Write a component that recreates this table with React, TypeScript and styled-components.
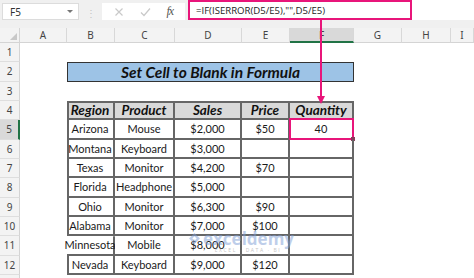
import React from "react";
import styled, { createGlobalStyle, css } from "styled-components";

const Global = createGlobalStyle`
  html, body { margin: 0; padding: 0; background: #ffffff; }
  #root { width: 474px; height: 278px; }
`;

const Page = styled.div`
  position: relative;
  width: 474px;
  height: 278px;
  overflow: hidden;
  background: #ffffff;
  display: flex;
  flex-direction: column;
  font-family: Lato, "Liberation Sans", sans-serif;
`;

const Toolbar = styled.div`
  height: 28px;
  flex: none;
  background: #f0f0f0;
  display: flex;
  align-items: flex-start;
  box-sizing: border-box;
`;

const NameBox = styled.div`
  margin: 3px 0 0 2px;
  width: 77px;
  height: 17px;
  background: #ffffff;
  border: 1px solid #dcdcdc;
  box-sizing: border-box;
  display: flex;
  align-items: center;
  justify-content: space-between;
  padding: 0 5px 0 7px;
  font-family: "Noto Sans", "Liberation Sans", sans-serif;
  font-size: 10px;
  color: #333;
`;

const Caret = styled.span`
  width: 0;
  height: 0;
  border-left: 3px solid transparent;
  border-right: 3px solid transparent;
  border-top: 3px solid #777;
`;

const Dots = styled.div`
  width: 23px;
  height: 20px;
  display: flex;
  align-items: center;
  justify-content: center;
  margin-top: 3px;
  color: #c4c4c4;
  font-size: 10px;
  font-family: "Noto Sans", sans-serif;
`;

const IconBox = styled.div`
  margin-top: 3px;
  width: 83px;
  height: 17px;
  background: #ffffff;
  display: flex;
  align-items: center;
  justify-content: space-around;
  padding: 0 4px;
  box-sizing: border-box;
`;

const Fx = styled.span`
  font-family: "Liberation Serif", serif;
  font-style: italic;
  font-size: 12px;
  color: #555;
  letter-spacing: -1px;
`;

const FormulaArea = styled.div`
  margin-left: 3px;
  flex: 1;
  height: 20px;
  background: #ffffff;
  display: flex;
`;

const FormulaBox = styled.div`
  width: 224px;
  height: 20px;
  box-sizing: border-box;
  border: 2px solid #e8157a;
  display: flex;
  align-items: center;
  padding-left: 6px;
  font-family: "Open Sans", sans-serif;
  font-size: 9.6px;
  color: #222;
`;

const Sheet = styled.div`
  display: grid;
  grid-template-columns: 20px 47px 48px 60px 67px 48px 64px 48px 49px 23px;
  grid-template-rows: 15px repeat(13, 19.33px);
`;

const Corner = styled.div`
  background: #f3f3f3;
  border-right: 1px solid #d4d4d4;
  border-bottom: 1px solid #d4d4d4;
  box-sizing: border-box;
  position: relative;
  &::after {
    content: "";
    position: absolute;
    right: 2px;
    bottom: 2px;
    width: 0;
    height: 0;
    border-left: 7px solid transparent;
    border-bottom: 7px solid #c8c8c8;
  }
`;

const ColHead = styled.div<{ $sel?: boolean }>`
  background: ${(p) => (p.$sel ? "#d9d9d9" : "#f3f3f3")};
  border-right: 1px solid #d8d8d8;
  border-bottom: ${(p) => (p.$sel ? "2px solid #217346" : "1px solid #d4d4d4")};
  box-sizing: border-box;
  display: flex;
  align-items: center;
  justify-content: center;
  font-family: "Noto Sans", "Liberation Sans", sans-serif;
  font-size: 10px;
  color: #444;
`;

const RowHead = styled.div<{ $sel?: boolean }>`
  background: ${(p) => (p.$sel ? "#d9d9d9" : "#f3f3f3")};
  border-right: ${(p) => (p.$sel ? "2px solid #217346" : "1px solid #d4d4d4")};
  border-bottom: 1px solid #dedede;
  box-sizing: border-box;
  display: flex;
  align-items: center;
  justify-content: center;
  font-family: "Noto Sans", "Liberation Sans", sans-serif;
  font-size: 10px;
  color: #444;
`;

const Blank = styled.div``;

const Title = styled.div`
  grid-column: span 5;
  background: #9dc3e6;
  border: 1px solid #333;
  box-sizing: border-box;
  display: flex;
  align-items: center;
  justify-content: center;
  font-family: Lato, sans-serif;
  font-weight: 700;
  font-style: italic;
  font-size: 15.5px;
  color: #111;
`;

const line = "#666";

const Cell = styled.div<{ $head?: boolean; $first?: boolean; $top?: boolean; $open?: boolean }>`
  position: relative;
  box-sizing: border-box;
  display: flex;
  align-items: center;
  justify-content: center;
  white-space: nowrap;
  font-family: Lato, sans-serif;
  font-size: 11px;
  color: #1a1a1a;
  border-right: 2px solid ${line};
  border-bottom: 2px solid ${line};
  ${(p) =>
    p.$head &&
    css`
      background: #d9d9d9;
      font-weight: 700;
      font-style: italic;
      font-size: 13.5px;
      color: #111;
    `}
  ${(p) =>
    p.$first &&
    !p.$open &&
    css`
      box-shadow: inset 2px 0 0 ${line};
    `}
  ${(p) =>
    p.$head &&
    p.$first &&
    css`
      box-shadow: inset 2px 2px 0 ${line};
    `}
  ${(p) =>
    p.$top &&
    !p.$first &&
    css`
      box-shadow: inset 0 2px 0 ${line};
    `}
  ${(p) =>
    p.$open &&
    css`
      clip-path: inset(0 0 -2px -20px);
    `}
`;

const Active = styled.div`
  position: absolute;
  left: -1px;
  top: -2px;
  right: -2px;
  bottom: -2px;
  border: 2px solid #e8157a;
  pointer-events: none;
  &::after {
    content: "";
    position: absolute;
    right: -3px;
    bottom: -3px;
    width: 4px;
    height: 4px;
    background: #8a3a5a;
  }
`;

const Arrow = styled.svg`
  position: absolute;
  left: 316px;
  top: 20px;
`;

const Watermark = styled.div`
  position: absolute;
  left: 188px;
  top: 230px;
  display: flex;
  flex-direction: column;
  align-items: center;
  opacity: 0.5;
  pointer-events: none;
`;

const WmRow = styled.div`
  display: flex;
  align-items: center;
  gap: 2px;
`;

const WmText = styled.span`
  font-family: "Open Sans", sans-serif;
  font-weight: 700;
  font-size: 17px;
  color: #7f9fd6;
  line-height: 17px;
`;

const WmSub = styled.span`
  font-family: "Open Sans", sans-serif;
  font-size: 5px;
  color: #8a8a8a;
  letter-spacing: 1.6px;
  margin-left: 14px;
  line-height: 6px;
`;

const cols = ["A", "B", "C", "D", "E", "F", "G", "H", "I"];
const header = ["Region", "Product", "Sales", "Price", "Quantity"];
const rows: string[][] = [
  ["Arizona", "Mouse", "$2,000", "$50", "40"],
  ["Montana", "Keyboard", "$3,000", "", ""],
  ["Texas", "Monitor", "$4,200", "$70", ""],
  ["Florida", "Headphone", "$5,000", "", ""],
  ["Ohio", "Monitor", "$6,300", "$90", ""],
  ["Alabama", "Monitor", "$7,000", "$100", ""],
  ["Minnesota", "Mobile", "$8,000", "", ""],
  ["Nevada", "Keyboard", "$9,000", "$120", ""],
];

function blanks(n: number, key: string) {
  return Array.from({ length: n }, (_, i) => <Blank key={`${key}-${i}`} />);
}

export default function App() {
  return (
    <Page>
      <Global />
      <Toolbar>
        <NameBox>
          F5
          <Caret />
        </NameBox>
        <Dots>⋮</Dots>
        <IconBox>
          <svg width="10" height="10" viewBox="0 0 10 10">
            <path d="M1.5 1.5 L8.5 8.5 M8.5 1.5 L1.5 8.5" stroke="#c9c9c9" strokeWidth="1.2" />
          </svg>
          <svg width="11" height="10" viewBox="0 0 11 10">
            <path d="M1 5.5 L4 8.5 L10 1.5" stroke="#c9c9c9" strokeWidth="1.2" fill="none" />
          </svg>
          <Fx>fx</Fx>
        </IconBox>
        <FormulaArea>
          <FormulaBox>=IF(ISERROR(D5/E5),"",D5/E5)</FormulaBox>
        </FormulaArea>
      </Toolbar>
      <Sheet>
        <Corner />
        {cols.map((c) => (
          <ColHead key={c} $sel={c === "F"}>
            {c}
          </ColHead>
        ))}
        <RowHead>1</RowHead>
        {blanks(9, "r1")}
        <RowHead>2</RowHead>
        <Blank />
        <Title>Set Cell to Blank in Formula</Title>
        {blanks(3, "r2")}
        <RowHead>3</RowHead>
        {blanks(9, "r3")}
        <RowHead>4</RowHead>
        <Blank />
        {header.map((h, i) => (
          <Cell key={h} $head $top $first={i === 0}>
            {h}
          </Cell>
        ))}
        {blanks(3, "r4")}
        {rows.map((r, ri) => (
          <React.Fragment key={ri}>
            <RowHead $sel={ri === 0}>{ri + 5}</RowHead>
            <Blank />
            {r.map((v, ci) => (
              <Cell key={ci} $first={ci === 0} $open={r[0] === "Minnesota" && ci === 0}>
                {v}
                {ri === 0 && ci === 4 && <Active />}
              </Cell>
            ))}
            {blanks(3, `r${ri + 5}`)}
          </React.Fragment>
        ))}
        <RowHead />
        {blanks(9, "r13")}
      </Sheet>
      <Arrow width="10" height="86" viewBox="0 0 10 86">
        <line x1="5" y1="0" x2="5" y2="78" stroke="#e8157a" strokeWidth="2" />
        <path d="M1 76 L9 76 L5 84 Z" fill="#e8157a" />
      </Arrow>
      <Watermark>
        <WmRow>
          <svg width="13" height="13" viewBox="0 0 12 12">
            <path d="M1 6 L6 1 L11 6 L6 11 Z" fill="#7f9fd6" />
            <path d="M4 6 L6 4 L8 6 L6 8 Z" fill="#ffffff" />
          </svg>
          <WmText>exceldemy</WmText>
        </WmRow>
        <WmSub>EXCEL · DATA · BI</WmSub>
      </Watermark>
    </Page>
  );
}
